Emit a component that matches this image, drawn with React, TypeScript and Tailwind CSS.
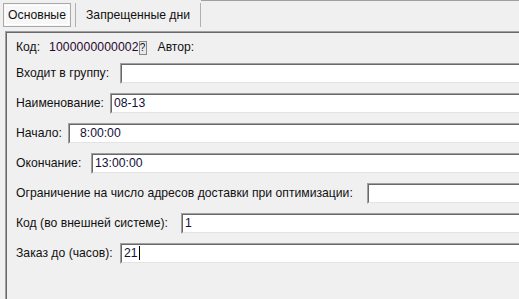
import React from 'react';

type Row = {
  label: string;
  labelW: number;
  value?: string;
  valuePad?: string;
  caret?: boolean;
};

const rows: Row[] = [
  { label: 'Входит в группу:', labelW: 104 },
  { label: 'Наименование:', labelW: 94, value: '08-13' },
  { label: 'Начало:', labelW: 52, value: '8:00:00', valuePad: 'pl-[10px]' },
  { label: 'Окончание:', labelW: 75, value: '13:00:00' },
  { label: 'Ограничение на число адресов доставки при оптимизации:', labelW: 351 },
  { label: 'Код (во внешней системе):', labelW: 165, value: '1' },
  { label: 'Заказ до (часов):', labelW: 104, value: '21', caret: true },
];

const Field: React.FC<{ value?: string; pad?: string; caret?: boolean }> = ({ value, pad, caret }) => (
  <div className="flex-1 h-[21px] border-t border-l border-[#a0a0a0] border-b border-b-[#f0f0f0] border-r-0">
    <div className="h-full border-t border-l border-[#696969] border-b border-b-[#e3e3e3] bg-white flex items-center">
      <span className={`${pad ?? 'pl-[2px]'} text-[#10103a] leading-none`}>
        {value}
        {caret && <span className="inline-block w-px h-[14px] bg-black align-middle ml-px -mt-[2px]" />}
      </span>
    </div>
  </div>
);

export default function App() {
  return (
    <div
      className="w-[519px] h-[299px] overflow-hidden bg-[#f0f0f0] text-[12.2px] text-[#111]"
      style={{ fontFamily: 'Tahoma, "Liberation Sans", Arial, sans-serif' }}
    >
      {/* Tabs */}
      <div className="h-[31px] relative flex">
        <div className="mt-[3px] ml-[3px] h-[24px] w-[68px] border border-[#a9a9a9] bg-[#f7f7f7] p-px">
          <div className="h-full border border-white flex items-center justify-center">
            Основные
          </div>
        </div>
        <div className="mt-[3px] ml-[4px] h-[24px] w-[126px] border-l border-r border-[#b0b0b0] flex items-center justify-center">
          Запрещенные дни
        </div>
        <div className="flex-1 border-t border-[#a0a0a0]" />
      </div>

      {/* Panel */}
      <div className="ml-[5px] h-[268px] border-t border-l border-[#a0a0a0]">
        <div className="h-full border-t border-l border-[#696969] pl-[9px]">
          <div className="h-[21px] mt-[4px] flex items-center">
            <span>Код:</span>
            <span className="ml-[9px] text-[#2a0830] tracking-[0.1px]">1000000000002</span>
            <span className="w-[8px] h-[14px] border border-[#888] bg-[#e8e8e8] text-[10px] leading-[12px] text-center">?</span>
            <span className="ml-[11px]">Автор:</span>
          </div>
          <div className="mt-[5px] flex flex-col gap-[9px]">
            {rows.map((r) => (
              <div key={r.label} className="flex items-center h-[21px]">
                <span className="shrink-0 whitespace-nowrap" style={{ width: r.labelW }}>
                  {r.label}
                </span>
                <Field value={r.value} pad={r.valuePad} caret={r.caret} />
              </div>
            ))}
          </div>
        </div>
      </div>
    </div>
  );
}
